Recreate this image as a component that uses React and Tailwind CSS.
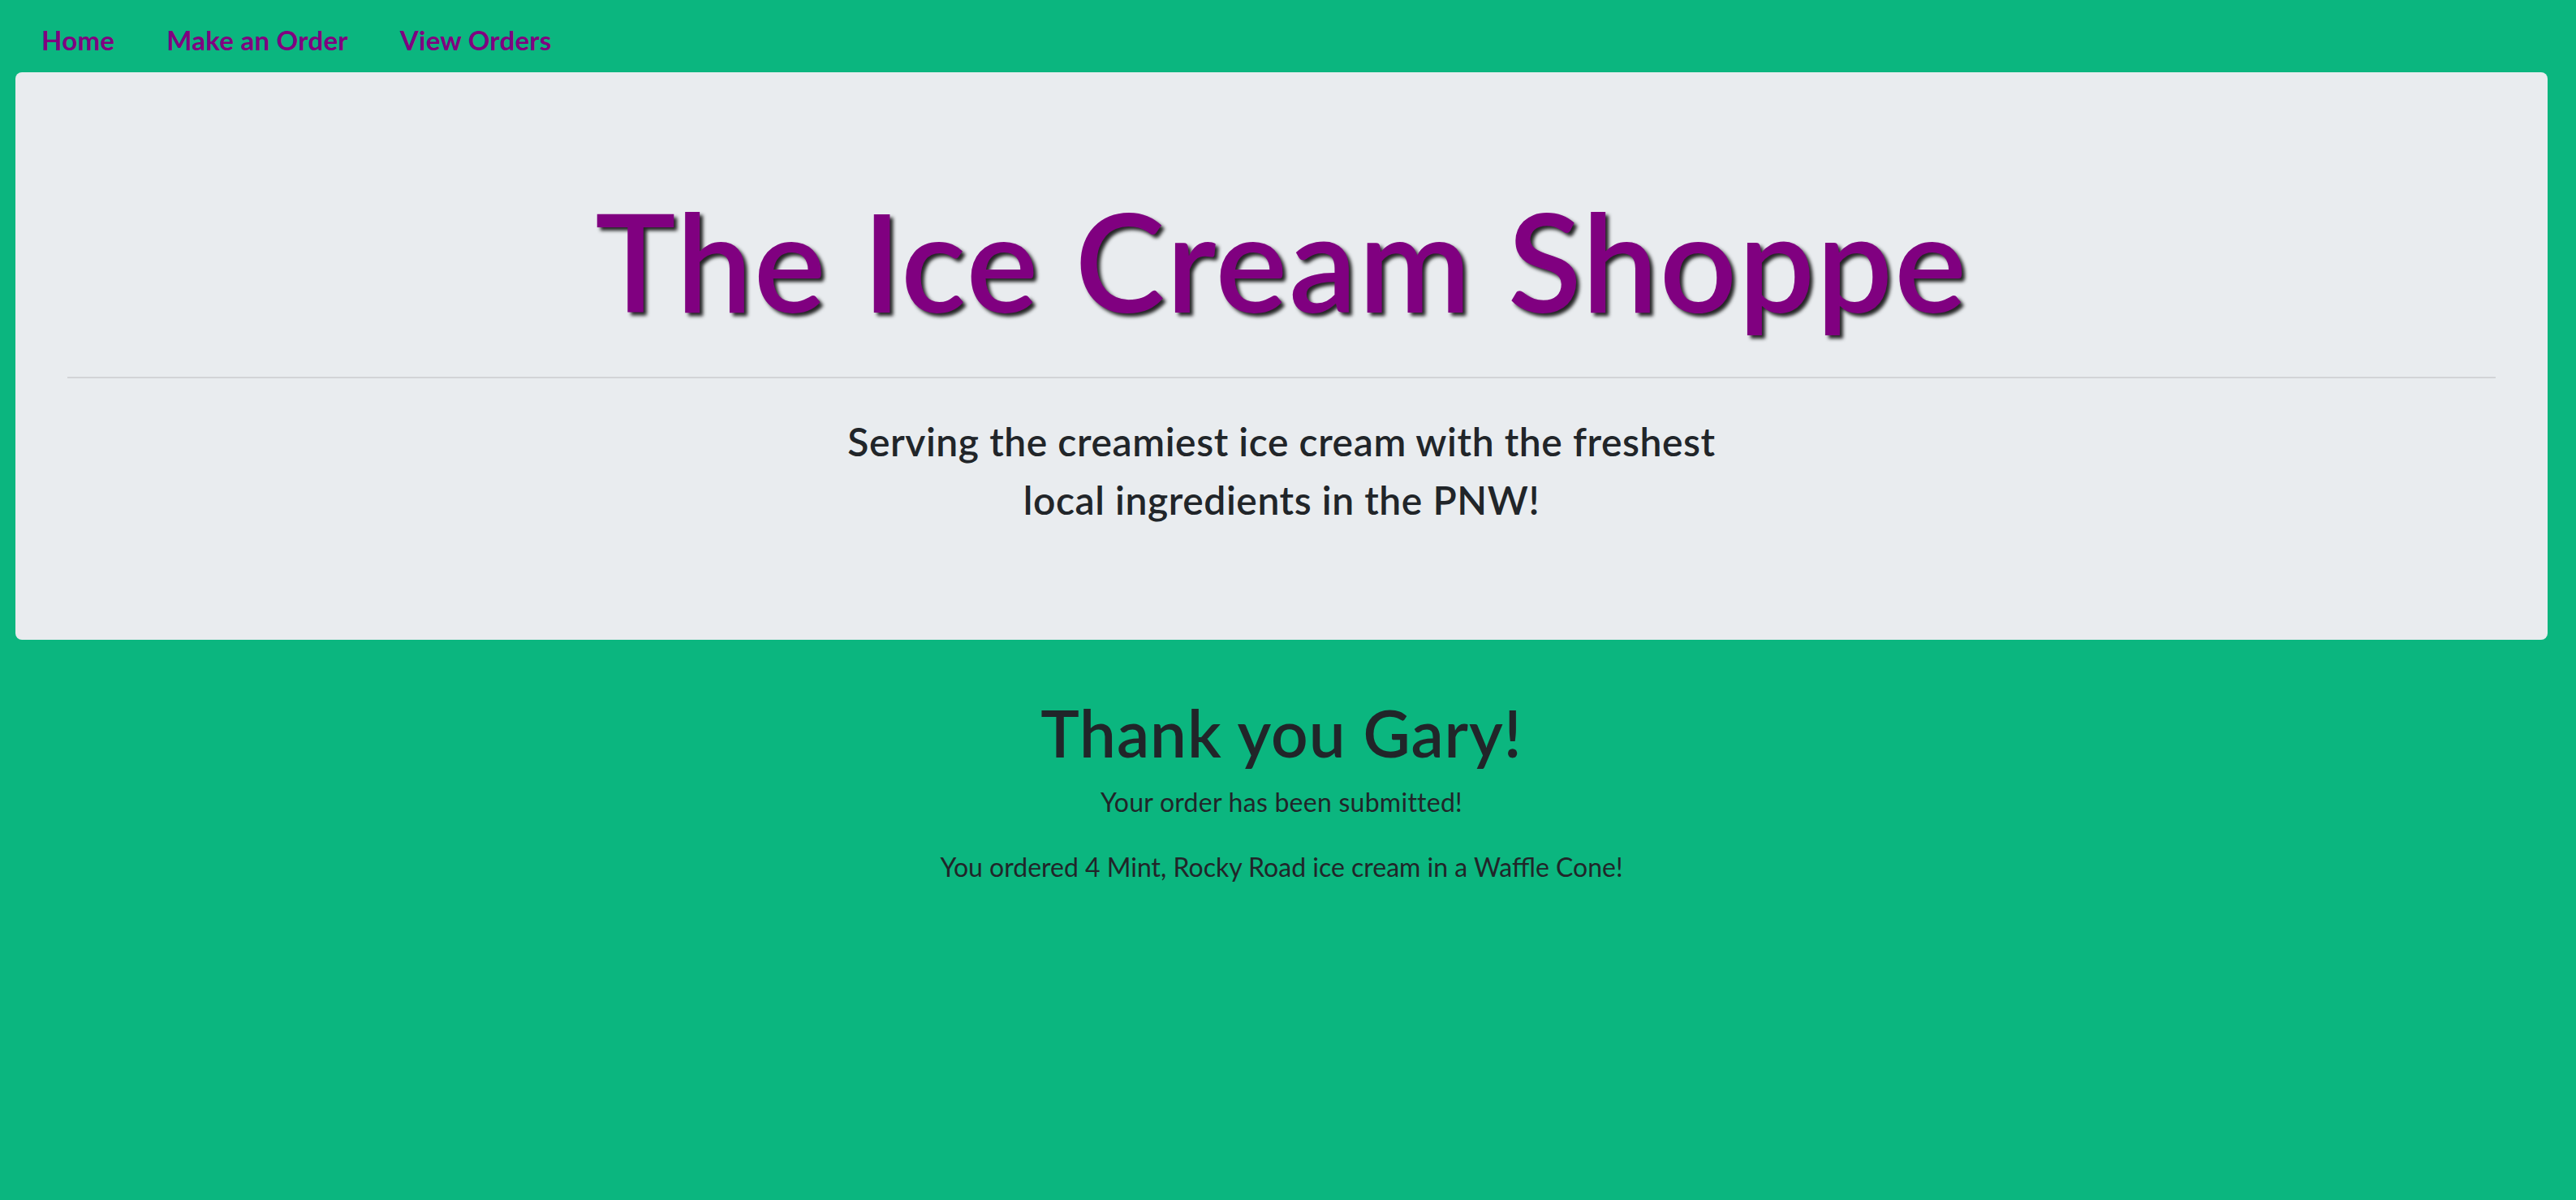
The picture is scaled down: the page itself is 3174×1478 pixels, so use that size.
export default function App() {
  return (
    <div className="min-h-screen w-full bg-[#0bb67f] text-[#212529] font-['Lato','Open_Sans',sans-serif]">
      <nav className="flex items-start px-[19px] pt-[9px]">
        {["Home", "Make an Order", "View Orders"].map((t) => (
          <a
            key={t}
            href="#"
            className="block px-[32px] py-[16px] text-[33px] leading-[48px] font-bold tracking-[0.008em] text-[#800080] no-underline"
          >
            {t}
          </a>
        ))}
      </nav>

      <section className="ml-[19px] mr-[35px] h-[699px] box-border rounded-[8px] bg-[#e9ecef] px-[64px] pt-[132px]">
        <h1 className="text-center text-[167px] leading-[200px] font-semibold tracking-[0.011em] text-[#800080] [text-shadow:4px_4px_4px_rgba(0,0,0,0.85)]">
          The Ice Cream Shoppe
        </h1>
        <hr className="mt-[43px] border-0 border-t-[2px] border-solid border-[#d2d4d7]" />
        <p className="mt-[42px] text-center text-[48px] leading-[72px] font-semibold tracking-[0.012em] text-[#212529]">
          Serving the creamiest ice cream with the freshest
          <br />
          local ingredients in the PNW!
        </p>
      </section>

      <main className="ml-[19px] mr-[35px] flex flex-col items-center text-center">
        <h2 className="mt-[66px] text-[80px] leading-[96px] font-semibold tracking-[0.012em] text-[#212529]">
          Thank you Gary!
        </h2>
        <p className="mt-[14px] text-[32px] leading-[48px] tracking-[0.008em] text-[#212529]">
          Your order has been submitted!
        </p>
        <p className="mt-[32px] text-[32px] leading-[48px] text-[#212529]">
          You ordered 4 Mint, Rocky Road ice cream in a Waffle Cone!
        </p>
      </main>
    </div>
  );
}
